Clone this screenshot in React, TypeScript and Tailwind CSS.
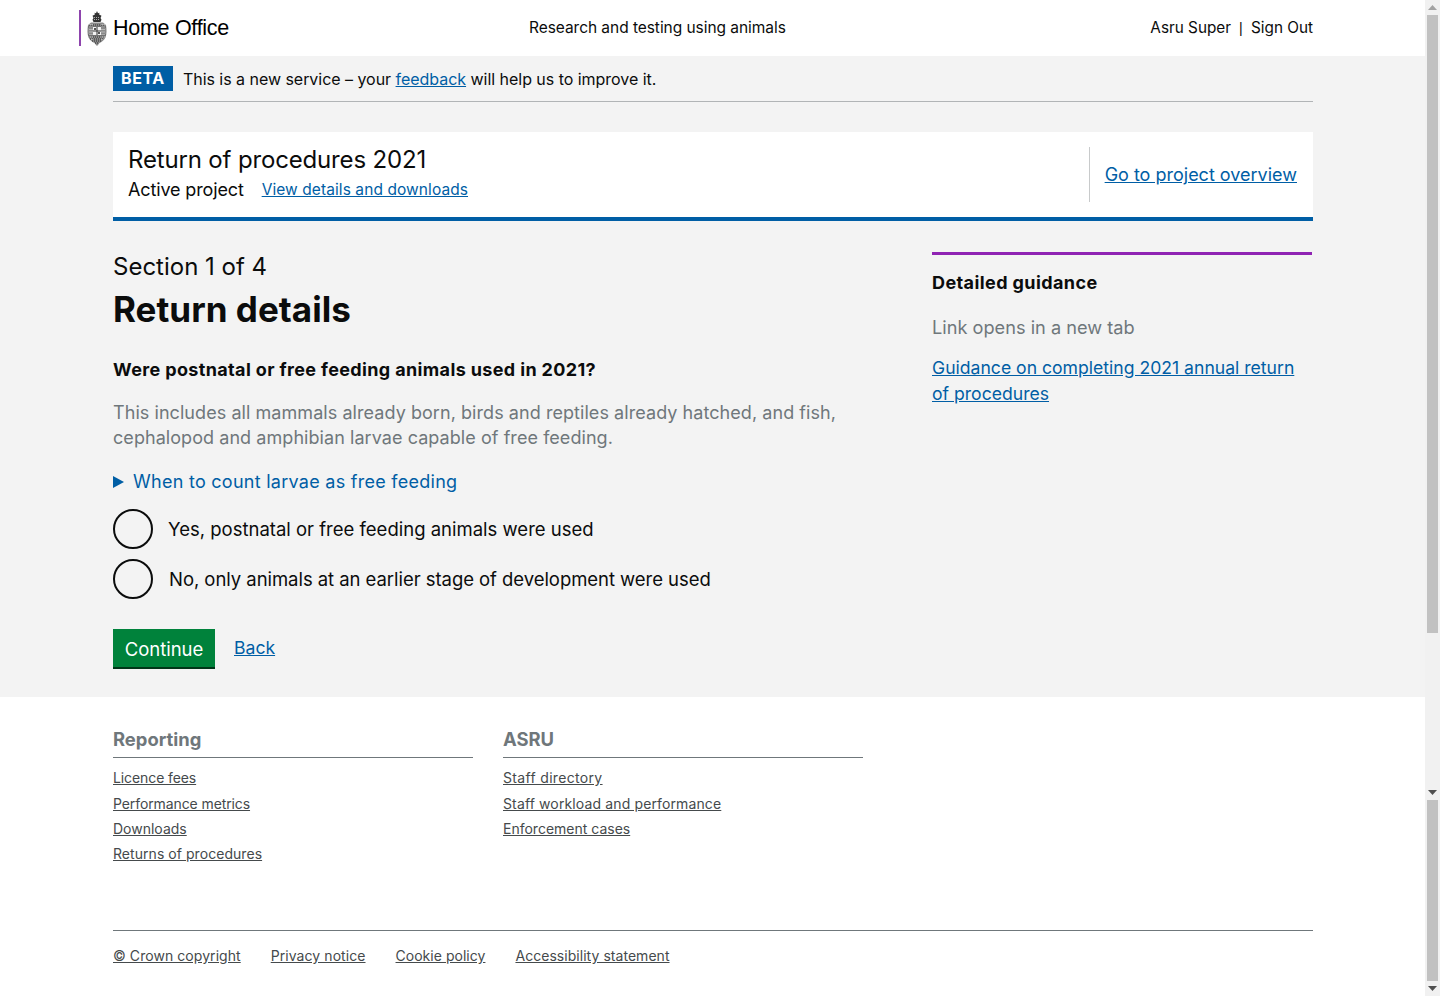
import React from "react";

const Crest = () => (
  <svg width="20" height="35" viewBox="0 0 20 35" className="shrink-0">
    <path d="M10 0l1 2.200 1.500-.4-.4 1.700 2.400 1.200-1 2.300 1 1.700-1 2.300H6.500l-1-2.300 1-1.700-1-2.300 2.400-1.200-.4-1.700 1.500.4z" fill="#333" />
    <path d="M7 6.500h6M7 8.500h6" stroke="#ddd" strokeWidth=".7" strokeDasharray="1 1" />
    <path d="M4 11.500h12l3 2.500c.8 5 .8 9-.5 12.500-1.500 3-4 4.500-6 5.500-.6 1-1.500 2-2.500 3-1-1-1.900-2-2.500-3-2-1-4.500-2.500-6-5.500C.2 23 .2 19 1 14z" fill="#8a8a8a" />
    <path d="M2 14h16M1.500 16h17M1.500 24h17M2 26h16M3 28h14M5 30h10M8 32h4" stroke="#222" strokeWidth=".9" strokeDasharray="1 1" />
    <path d="M3 13v15M5 13v16M15 13v16M17 13v15" stroke="#eee" strokeWidth=".9" strokeDasharray="1 1.500" />
    <rect x="6" y="16" width="8" height="8" fill="#f2f2f2" />
    <path d="M10 16v8M6 20h8" stroke="#333" strokeWidth="1" />
    <path d="M7 17h2v2H7zM11 21h2v2h-2z" fill="#555" />
  </svg>
);

const Scrollbar = ({ h, thumbTop, thumbH }: { h: string; thumbTop: string; thumbH: string }) => (
  <div className={`${h} w-[15px] bg-[#f1f1f1] flex flex-col items-center`}>
    <div className="h-[15px] flex items-center justify-center shrink-0">
      <svg width="9" height="5" viewBox="0 0 9 5"><path d="M4.500 0L9 5H0z" fill="#a3a3a3" /></svg>
    </div>
    <div className={`${thumbTop} ${thumbH} w-[11px] bg-[#c1c1c1]`} />
    <div className="mt-auto h-[15px] flex items-center justify-center shrink-0">
      <svg width="9" height="5" viewBox="0 0 9 5"><path d="M0 0h9L4.500 5z" fill="#505050" /></svg>
    </div>
  </div>
);

const Ln = ({ children, cls }: { children: React.ReactNode; cls: string }) => (
  <a href="#" className={`text-[14px] leading-[25px] text-[#454a4c] underline block ${cls}`}>{children}</a>
);

export default function App() {
  return (
    <div className="relative h-[996px] w-[1440px] overflow-hidden bg-white font-['Inter',sans-serif] text-[#0b0c0c]">
      <div className="w-[1425px]">
        <header className="h-14 bg-white flex items-center relative">
          <div className="ml-[79px] h-9 border-l-2 border-[#8e44ad] flex items-center pl-[6px] gap-[6px]">
            <Crest />
            <span className="font-['Liberation_Sans',sans-serif] text-[21.500px] tracking-[-0.28px] text-black">Home Office</span>
          </div>
          <div className="absolute left-[529px] top-[17px] text-[15.500px] tracking-[-0.05px] leading-[21px]">Research and testing using animals</div>
          <div className="ml-auto mr-[112px] text-[15.300px] flex items-center h-[21px]">
            <span>Asru Super</span>
            <span className="font-['Liberation_Sans',sans-serif] text-[14px] ml-[8px] mr-[9px] w-[3px]">|</span>
            <span>Sign Out</span>
          </div>
        </header>

        <main className="bg-[#f3f3f3] h-[641px] px-[113px] pt-[10px]">
          <div className="w-[1200px] h-[36px] border-b border-[#b1b4b6] flex items-start">
            <span className="bg-[#005ea5] text-white font-bold text-[16px] leading-[25px] h-[25px] px-2 tracking-[0.6px]">BETA</span>
            <span className="ml-[10px] text-[16px] leading-[26px] tracking-[-0.035px]">This is a new service – your <a href="#" className="text-[#005ea5] underline">feedback</a> will help us to improve it.</span>
          </div>

          <div className="mt-[30px] w-[1200px] h-[89px] bg-white border-b-4 border-[#005ea5] flex items-center pl-[15px] pr-[16px]">
            <div className="flex-1">
              <div className="text-[24px] leading-[26px] tracking-[-0.16px]">Return of procedures 2021</div>
              <div className="flex items-start gap-[18px] mt-[4px]">
                <span className="text-[18px] leading-[26px] tracking-[-0.14px]">Active project</span>
                <a href="#" className="text-[15.500px] leading-[26px] tracking-[0.08px] text-[#005ea5] underline">View details and downloads</a>
              </div>
            </div>
            <div className="h-[55px] border-l border-[#c8cacb] pl-[15px] flex items-center">
              <a href="#" className="text-[18px] text-[#005ea5] underline">Go to project overview</a>
            </div>
          </div>

          <div className="mt-[31px] flex">
            <div className="w-[819px]">
              <div className="text-[24px] leading-[30px]">Section 1 of 4</div>
              <h1 className="text-[35px] leading-[40px] font-bold mt-[7px] tracking-[0.03px]">Return details</h1>
              <div className="text-[18px] leading-[24px] font-bold mt-[29px] tracking-[0.36px]">Were postnatal or free feeding animals used in 2021?</div>
              <p className="text-[18px] leading-[25px] tracking-[0.06px] text-[#6f777b] mt-[18px] w-[760px]">This includes all mammals already born, birds and reptiles already hatched, and fish, cephalopod and amphibian larvae capable of free feeding.</p>
              <div className="flex items-center mt-[19px] h-[25px] text-[#005ea5]">
                <svg width="11" height="12" viewBox="0 0 11 12" className="mr-[9px]"><path d="M0 0l11 6-11 6z" fill="#005ea5" /></svg>
                <span className="text-[18px] tracking-[0.27px]">When to count larvae as free feeding</span>
              </div>
              <div className="mt-[15px] flex items-center h-10">
                <span className="w-10 h-10 rounded-full border-2 border-[#0b0c0c] shrink-0" />
                <span className="ml-[15px] text-[18.500px] pt-[2px]">Yes, postnatal or free feeding animals were used</span>
              </div>
              <div className="mt-[10px] flex items-center h-10">
                <span className="w-10 h-10 rounded-full border-2 border-[#0b0c0c] shrink-0" />
                <span className="ml-[16px] text-[18.500px] tracking-[-0.05px] pt-[2px]">No, only animals at an earlier stage of development were used</span>
              </div>
              <div className="mt-[30px] flex items-start">
                <button className="h-10 w-[102px] bg-[#00823b] border-b-2 border-[#003618] text-white text-[18.500px] pt-[3px]">Continue</button>
                <a href="#" className="ml-[19px] text-[17.600px] leading-[38px] text-[#005ea5] underline">Back</a>
              </div>
            </div>
            <aside className="w-[380px] border-t-[3px] border-[#8f23b3]">
              <div className="text-[18px] font-bold leading-[24px] mt-[16px] tracking-[0.4px]">Detailed guidance</div>
              <div className="text-[18.200px] leading-[25px] text-[#6f777b] mt-[20px]">Link opens in a new tab</div>
              <a href="#" className="block text-[17.600px] leading-[26px] text-[#005ea5] underline mt-[15px]">Guidance on completing 2021 annual return of procedures</a>
            </aside>
          </div>
        </main>

        <footer className="bg-white px-[113px] pt-[30px]">
          <div className="flex gap-[30px]">
            <div className="w-[360px]">
              <div className="text-[18.400px] font-bold leading-[25px] text-[#6f777b] border-b border-[#6f777b] pb-[5px] mb-[7px]">Reporting</div>
              <Ln cls="tracking-[-0.1px] h-[26px]">Licence fees</Ln>
              <Ln cls="tracking-[-0.1px]">Performance metrics</Ln>
              <Ln cls="">Downloads</Ln>
              <Ln cls="tracking-[0.05px]">Returns of procedures</Ln>
            </div>
            <div className="w-[360px]">
              <div className="text-[18.400px] font-bold leading-[25px] text-[#6f777b] border-b border-[#6f777b] pb-[5px] mb-[7px]">ASRU</div>
              <Ln cls="tracking-[0.33px] h-[26px]">Staff directory</Ln>
              <Ln cls="tracking-[0.13px]">Staff workload and performance</Ln>
              <Ln cls="">Enforcement cases</Ln>
            </div>
          </div>
          <div className="mt-[64px] w-[1200px] border-t border-[#6f777b] pt-[12px] flex gap-[30px]">
            <Ln cls="tracking-[0.06px]">© Crown copyright</Ln>
            <Ln cls="tracking-[0.07px]">Privacy notice</Ln>
            <Ln cls="tracking-[0.03px]">Cookie policy</Ln>
            <Ln cls="tracking-[0.04px]">Accessibility statement</Ln>
          </div>
        </footer>
      </div>
      <div className="absolute right-0 top-0">
        <Scrollbar h="h-[800px]" thumbTop="mt-0" thumbH="h-[618px]" />
        <Scrollbar h="h-[196px]" thumbTop="mt-[-15px]" thumbH="h-[181px]" />
      </div>
    </div>
  );
}
